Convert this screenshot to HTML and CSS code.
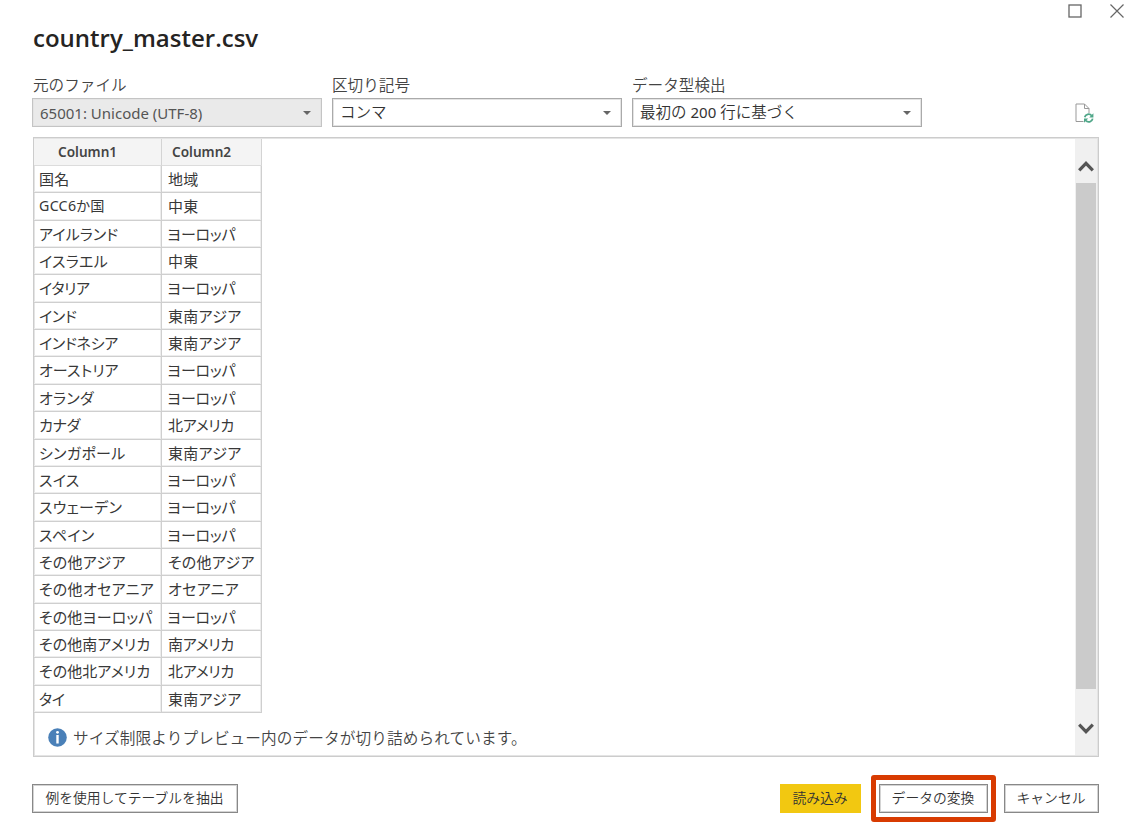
FILE: index.html
```html
<!DOCTYPE html>
<html lang="ja">
<head>
<meta charset="utf-8">
<title>country_master.csv</title>
<link rel="stylesheet" href="styles.css">
</head>
<body>
<div class="dialog">
  <div class="window-controls">
    <svg width="14" height="14" viewBox="0 0 14 14"><rect x="1" y="1" width="12" height="12" fill="none" stroke="#666" stroke-width="1.3"/></svg>
    <svg width="14" height="14" viewBox="0 0 14 14"><path d="M.5.5l13 13M13.500.5l-13 13" fill="none" stroke="#666" stroke-width="1.2"/></svg>
  </div>
  <h1 class="title">country_master.csv</h1>
  <div class="options">
    <div class="field"><span class="label">元のファイル</span><div class="select disabled"><span class="value latin">65001: Unicode (UTF-8)</span><i class="arrow"></i></div></div>
    <div class="field"><span class="label">区切り記号</span><div class="select"><span class="value">コンマ</span><i class="arrow"></i></div></div>
    <div class="field"><span class="label">データ型検出</span><div class="select"><span class="value">最初の <span class="number">200</span> 行に基づく</span><i class="arrow"></i></div></div>
    <svg class="refresh" width="19" height="20" viewBox="0 0 19 20"><path d="M8.500 18.500H1V1h8.500l4.500 4.500V10M9.500 1v4.500h4.500" fill="none" stroke="#999" stroke-width="1"/><path d="M9.700 14.300a4 4 0 0 1 7-1.600M17.700 15.700a4 4 0 0 1-7 1.800" fill="none" stroke="#4fa688" stroke-width="1.800"/><path d="M18.400 10.300v4.200h-4.200zM9 19.800v-4.200h4.200z" fill="#4fa688"/></svg>
  </div>
  <div class="preview">
    <div class="content">
      <div class="grid">
        <div class="head">Column1</div><div class="head second">Column2</div>
        <div class="rows">
          <div>国名</div><div>地域</div>
          <div class="mixed">GCC6か国</div><div>中東</div>
          <div class="narrow">アイルランド</div><div class="narrow">ヨーロッパ</div>
          <div>イスラエル</div><div>中東</div>
          <div class="tight">イタリア</div><div class="narrow">ヨーロッパ</div>
          <div class="tight">インド</div><div>東南アジア</div>
          <div class="tight">インドネシア</div><div>東南アジア</div>
          <div class="narrow">オーストリア</div><div class="narrow">ヨーロッパ</div>
          <div>オランダ</div><div class="narrow">ヨーロッパ</div>
          <div class="tight">カナダ</div><div class="tight">北アメリカ</div>
          <div>シンガポール</div><div>東南アジア</div>
          <div>スイス</div><div class="narrow">ヨーロッパ</div>
          <div>スウェーデン</div><div class="narrow">ヨーロッパ</div>
          <div>スペイン</div><div class="narrow">ヨーロッパ</div>
          <div>その他アジア</div><div>その他アジア</div>
          <div>その他オセアニア</div><div>オセアニア</div>
          <div class="narrow">その他ヨーロッパ</div><div class="narrow">ヨーロッパ</div>
          <div class="narrow">その他南アメリカ</div><div class="tight">南アメリカ</div>
          <div class="narrow">その他北アメリカ</div><div class="tight">北アメリカ</div>
          <div class="tight">タイ</div><div>東南アジア</div>
        </div>
      </div>
      <div class="notice">
        <svg width="19" height="19" viewBox="0 0 19 19"><circle cx="9.500" cy="9.500" r="9.300" fill="#4a80b8"/><rect x="8.300" y="7" width="2.400" height="8.500" fill="#fff"/><circle cx="9.500" cy="4.300" r="1.400" fill="#fff"/></svg>
        <span>サイズ制限よりプレビュー内のデータが切り詰められています。</span>
      </div>
    </div>
    <div class="scrollbar">
      <svg width="16" height="12" viewBox="0 0 16 12"><path d="M1.200 10.300L8 3.300l6.800 7" fill="none" stroke="#555" stroke-width="3.200"/></svg>
      <div class="thumb"></div>
      <svg class="down" width="16" height="12" viewBox="0 0 16 12"><path d="M1.200 1.700L8 8.700l6.800-7" fill="none" stroke="#555" stroke-width="3.200"/></svg>
    </div>
  </div>
  <div class="footer">
    <button class="button extract">例を使用してテーブルを抽出</button>
    <button class="button load">読み込み</button>
    <div class="highlight"><button class="button transform">データの変換</button></div>
    <button class="button cancel">キャンセル</button>
  </div>
</div>
</body>
</html>
```
FILE: styles.css
```css
* { box-sizing: border-box; }
body { margin: 0; background: #fff; font-family: "Noto Sans", "Noto Sans CJK JP", sans-serif; color: #444; }
svg { display: block; flex: none; }
.dialog { width: 1132px; height: 827px; overflow: hidden; display: flex; flex-direction: column; }
.dialog > * { flex: none; }
.window-controls { height: 22px; padding: 4px 8px 0 0; display: flex; justify-content: flex-end; gap: 28px; }
.title { margin: 0 0 0 33px; height: 52px; line-height: 32px; font-family: "Open Sans", "Noto Sans", sans-serif; font-size: 24px; font-weight: 600; color: #252423; white-space: nowrap; }
.options { height: 64px; padding-left: 32px; display: flex; gap: 10px; }
.field { width: 290px; }
.label { display: block; height: 24px; line-height: 20px; font-family: "Noto Sans CJK JP", sans-serif; font-size: 15.600px; font-weight: 350; color: #444; }
.field:first-child .label { padding-left: 1px; }
.select { height: 29px; border: 1.500px solid #aaa; box-shadow: inset 0 0 0 1px #e4e4e4; padding: 0 10px 0 7px; display: flex; align-items: center; justify-content: space-between; color: #333; font-size: 15.500px; white-space: nowrap; }
.disabled { background: #eaeaea; border-color: #c4c4c4; color: #555; }
.value { line-height: 24px; font-weight: 350; padding-bottom: 2px; }
.latin { font-size: 15px; font-weight: 400; padding-bottom: 0; }
.number { font-size: 15px; font-weight: 400; }
.arrow { border: 4px solid transparent; border-top-color: #666; border-bottom: 0; }
.refresh { margin: 29px 0 0 143px; }
.preview { width: 1066px; height: 620px; margin-left: 33px; margin-top: -1px; border: 1px solid #ccc; box-shadow: inset 0 0 0 1px #e4e4e4; padding: 1px 1px 1px 0; display: flex; }
.content { flex: 1; }
.grid { width: 228px; display: grid; grid-template-columns: 128px 100px; }
.head { height: 27px; background: #f4f4f4; border-right: 1px solid #d4d4d4; border-bottom: 1px solid #dcdcdc; font-size: 13.600px; font-weight: 600; line-height: 26px; padding-left: 24px; color: #444; }
.second { padding-left: 10px; }
.rows { grid-column: 1 / 3; height: 547px; display: grid; grid-template-columns: 128px 100px; grid-template-rows: repeat(20, 1fr); }
.rows div { border-right: 1px solid #cfcfcf; border-bottom: 1px solid #cfcfcf; box-shadow: inset -1px -1px #ededed; padding-left: 5px; font-family: "Noto Sans CJK JP", sans-serif; font-size: 15px; line-height: 26px; font-feature-settings: "palt"; letter-spacing: .300px; color: #383838; white-space: nowrap; min-height: 0; }
.rows div:nth-child(even) { padding-left: 6px; }
.rows .narrow { letter-spacing: .100px; }
.rows .narrow:nth-child(even) { padding-left: 5px; letter-spacing: -.300px; }
.rows .tight { letter-spacing: -.300px; }
.rows .mixed { font-family: "Noto Sans", "Noto Sans CJK JP", sans-serif; font-size: 14.200px; }
.notice { display: flex; align-items: center; gap: 6px; padding: 14px 0 0 14px; font-family: "Noto Sans CJK JP", sans-serif; font-size: 15.650px; letter-spacing: .100px; line-height: 21px; font-weight: 350; white-space: nowrap; }
.scrollbar { width: 22px; background: #f0f0f0; display: flex; flex-direction: column; align-items: center; padding-top: 21px; }
.thumb { width: 20px; height: 506px; margin-top: 11px; background: #cbcbcb; flex: none; }
.down { margin-top: 34px; }
.footer { height: 52px; margin-top: 18px; padding-left: 32px; display: flex; align-items: flex-start; }
.button { height: 29px; margin-top: 9px; padding: 0 1px 2px 0; border: 1px solid #888; box-shadow: inset 0 0 0 1px #d4d4d4; background: #fff; font-family: "Noto Sans CJK JP", sans-serif; font-size: 13.800px; line-height: 25px; color: #333; white-space: nowrap; font-weight: 350; }
.extract { width: 206px; }
.load { width: 81px; margin-left: 542px; background: #f2c811; border-color: #f2c811; box-shadow: none; }
.highlight { width: 125px; height: 47px; margin-left: 10px; border: 5px solid #d83b01; border-radius: 3px; padding: 4px 3px; }
.transform { width: 109px; margin: 0; }
.cancel { width: 95px; margin-left: 8px; }
```
